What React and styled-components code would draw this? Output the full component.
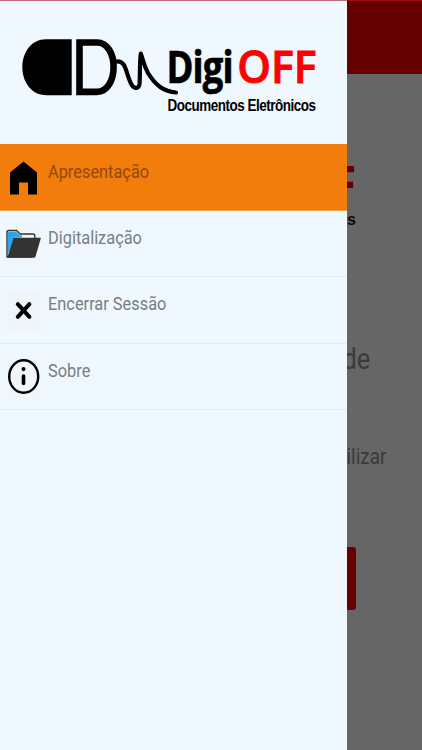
import React from "react";
import styled, { createGlobalStyle } from "styled-components";

const Global = createGlobalStyle`
  * { box-sizing: border-box; }
  body { margin: 0; font-family: Roboto, "Liberation Sans", sans-serif; }
`;

const Screen = styled.div`
  position: relative;
  width: 422px;
  height: 750px;
  overflow: hidden;
  background: #666;
`;

const Page = styled.main`
  display: flex;
  flex-direction: column;
  align-items: flex-end;
  height: 100%;
`;

const AppBar = styled.header`
  width: 100%;
  height: 74.4px;
  background: #640000;
  border-top: 1px solid #a00c0e;
`;

const PageLogo = styled.svg`
  display: block;
  width: 82px;
  height: 75px;
  margin-top: 78.6px;
`;

const PageText = styled.p`
  margin: ${(p) => p.$top}px ${(p) => p.$right}px 0 0;
  color: #3a3a3a;
  font-size: ${(p) => p.$size}px;
  line-height: 36px;
  white-space: nowrap;
  transform: scaleX(0.86);
  transform-origin: right;
`;

const PageButton = styled.div`
  width: 290px;
  height: 63.5px;
  margin: 72px 66px 0 0;
  border-radius: 3px;
  background: #670000;
`;

const Drawer = styled.aside`
  position: absolute;
  inset: 0 auto 0 0;
  width: 346.7px;
  background: #eff7ff;
  border-top: 1px solid #c36c75;
`;

const DrawerHeader = styled.div`
  height: 143.4px;
`;

const Brand = styled.svg`
  display: block;
  width: 346px;
  height: 143px;
`;

const Menu = styled.nav`
  display: flex;
  flex-direction: column;
`;

const MenuItem = styled.a`
  display: flex;
  height: 66.4px;
  padding: 15.15px 0 0 6px;
  border-bottom: 1px solid ${(p) => (p.$active ? "#efa052" : "#e3ebf2")};
  background: ${(p) => (p.$active ? "#f27c0c" : "transparent")};
  color: ${(p) => (p.$active ? "#91490a" : "#787e82")};
`;

const Icon = styled.svg`
  flex: none;
  width: 36px;
  height: 39px;
  background: ${(p) => (p.$tile ? "#f0f5fa" : "transparent")};
`;

const Label = styled.span`
  margin: 0 0 0 6px;
  height: 24px;
  font-size: 19.2px;
  line-height: 24px;
  white-space: nowrap;
  transform: scaleX(0.853);
  transform-origin: left;
`;

const HomeIcon = () => (
  <Icon viewBox="0 0 36 39">
    <path d="M17.5 1.5 31 12.5V34.5H28V34.5H22V22.5H13V34.5H4V12.5Z" fill="#000" />
  </Icon>
);

const FolderIcon = () => (
  <Icon viewBox="0 0 36 39" $tile>
    <path d="M1 31V6.5Q1 4.5 3 4.5H10.5L14 8H27Q28.8 8 28.8 10V13L25 31Z" fill="#edf3f7" stroke="#333" strokeWidth="1.4" />
    <path d="M2 28V7Q2 5.7 3.5 5.7H10L13.5 9.3H16V11.5H8.5Z" fill="#2da5e8" />
    <path d="M8.5 11.8H34.2Q35 11.8 34.7 12.8L29.5 30.5Q29.1 31.8 27.8 31.8H3Q1.2 31.8 1.8 30L7.3 12.8Q7.6 11.8 8.5 11.8Z" fill="#333" />
  </Icon>
);

const CloseIcon = () => (
  <Icon viewBox="0 0 36 39" $tile>
    <path d="M11.8 12.2 23.4 24.8M23.4 12.2 11.8 24.8" stroke="#000" strokeWidth="4" strokeLinecap="round" />
  </Icon>
);

const InfoIcon = () => (
  <Icon viewBox="0 0 36 39" $tile>
    <ellipse cx="17.7" cy="17.5" rx="14.5" ry="16.3" fill="none" stroke="#000" strokeWidth="2.4" />
    <ellipse cx="17.5" cy="10.1" rx="2" ry="2.1" />
    <path d="M17.5 17V24.4" stroke="#000" strokeWidth="3.6" strokeLinecap="round" />
  </Icon>
);

const items = [
  { label: "Apresentação", icon: HomeIcon, active: true },
  { label: "Digitalização", icon: FolderIcon },
  { label: "Encerrar Sessão", icon: CloseIcon },
  { label: "Sobre", icon: InfoIcon },
];

export default function App() {
  return (
    <Screen>
      <Global />
      <Page>
        <AppBar />
        <PageLogo viewBox="340 153 82 75">
          <text x="329" y="201.5" fill="#650000" fontFamily="Open Sans" fontWeight="700" fontSize="51" textLength="27.6" lengthAdjust="spacingAndGlyphs">F</text>
          <text x="355.5" y="225" textAnchor="end" fill="#080808" fontFamily="Liberation Sans" fontWeight="700" fontSize="16" letterSpacing="-0.5">os</text>
        </PageLogo>
        <PageText $top={113} $right={51.5} $size={29.5}>de</PageText>
        <PageText $top={62} $right={35.5} $size={22}>ilizar</PageText>
        <PageButton />
      </Page>
      <Drawer>
        <DrawerHeader>
          <Brand viewBox="0 1 346 143">
            <path d="M71.7 39.2V95.2H46C31.5 95.2 22.3 82 22.3 67S31.5 39.2 46 39.2Z" />
            <path d="M79.5 42.5H97C107.5 42.5 113.6 54 113.6 67S107.5 91.9 97 91.9H79.5Z" fill="none" stroke="#000" strokeWidth="6.6" />
            <path d="M116 61.5C126 60 125.5 72 130.5 82.5C133 89 138.5 90 139.5 84C140.2 77 139.5 62 140.8 53.5C143 59 143.5 65 148 73C156 86 164 91.5 176 92.5" fill="none" stroke="#000" strokeWidth="4.2" strokeLinecap="round" strokeLinejoin="round" />
            <text x="166.4" y="82.6" letterSpacing="-1" stroke="#000" strokeWidth="0.7" strokeLinejoin="round" fontFamily="Open Sans" fontWeight="700" fontSize="45" textLength="66.5" lengthAdjust="spacingAndGlyphs">Digi</text>
            <text x="237.2" y="82.8" fill="#ff0000" stroke="#ff0000" strokeWidth="0.9" fontFamily="Open Sans" fontWeight="600" fontSize="44.6" textLength="79.4" lengthAdjust="spacingAndGlyphs">OFF</text>
            <text x="167.6" y="110.7" letterSpacing="-0.55" fontFamily="Liberation Sans" fontWeight="700" fontSize="15.6" textLength="148" lengthAdjust="spacingAndGlyphs">Documentos Eletrônicos</text>
          </Brand>
        </DrawerHeader>
        <Menu>
          {items.map(({ label, icon: ItemIcon, active }) => (
            <MenuItem key={label} $active={active}>
              <ItemIcon />
              <Label>{label}</Label>
            </MenuItem>
          ))}
        </Menu>
      </Drawer>
    </Screen>
  );
}
